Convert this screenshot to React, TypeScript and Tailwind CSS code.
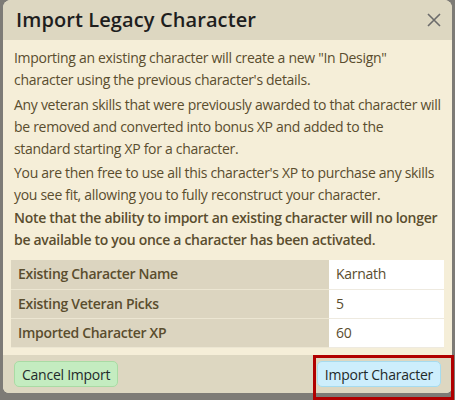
const rows = [
  { label: 'Existing Character Name', value: 'Karnath' },
  { label: 'Existing Veteran Picks', value: '5' },
  { label: 'Imported Character XP', value: '60' },
]

export default function App() {
  return (
    <div
      className="h-[400px] w-[455px] overflow-hidden bg-[#7d7b76] pl-[3px] pr-[3px]"
      style={{ fontFamily: '"Open Sans", "Noto Sans", sans-serif' }}
    >
      <div className="flex h-[393px] flex-col overflow-hidden rounded-b-[6px] rounded-t-[8px] bg-[#f5eed8]">
        <div className="flex h-[40px] items-center justify-between bg-[#ddd7c1] pl-[13px] pr-[10px]">
          <h1 className="text-[20px] font-semibold tracking-[0.1px] text-[#1e1e1e]">Import Legacy Character</h1>
          <svg width="16" height="16" viewBox="0 0 16 16" className="text-[#6b6b6b]">
            <path d="M2 2 L14 14 M14 2 L2 14" stroke="currentColor" strokeWidth="1.6" fill="none" />
          </svg>
        </div>

        <div className="flex flex-col whitespace-nowrap px-[8px] pt-[7px] text-[14px] leading-[22px] tracking-[-0.3px] text-[#5a4d2e]">
          <p className="mb-[3px] pl-[3px]">
            Importing an existing character will create a new "In Design"<br />
            character using the previous character's details.
          </p>
          <p className="mb-[2px] pl-[3px]">
            Any veteran skills that were previously awarded to that character will<br />
            be removed and converted into bonus XP and added to the<br />
            standard starting XP for a character.
          </p>
          <p className="mb-[1px] pl-[3px]">
            You are then free to use all this character's XP to purchase any skills<br />
            you see fit, allowing you to fully reconstruct your character.
          </p>
          <p className="mb-[9px] pl-[3px] font-semibold">
            Note that the ability to import an existing character will no longer<br />
            be available to you once a character has been activated.
          </p>

          <table className="w-full border-collapse">
            <tbody>
              {rows.map((r) => (
                <tr key={r.label} className="h-[29px]">
                  <td className="w-[318px] border-b border-[#ece6d2] bg-[#dcd5c0] pl-[7px] font-semibold">{r.label}</td>
                  <td className="border-b border-[#eeeae0] bg-white pl-[7px]">{r.value}</td>
                </tr>
              ))}
            </tbody>
          </table>
        </div>

        <div className="mt-auto flex h-[38px] items-center justify-between bg-[#ddd7c1] px-[11px] text-[14px] tracking-[-0.25px] text-[#1f2a2a]">
          <button className="h-[26px] rounded-[5px] border border-[#a9dba4] bg-[#c4ecc0] px-[7px]">Cancel Import</button>
          <button className="h-[26px] rounded-[5px] border border-[#a6dcef] bg-[#cdeefc] px-[7px]">Import Character</button>
        </div>
      </div>
      <div className="pointer-events-none absolute left-[313px] top-[355px] h-[45px] w-[141px] border-[3px] border-[#b00000]" />
    </div>
  )
}
